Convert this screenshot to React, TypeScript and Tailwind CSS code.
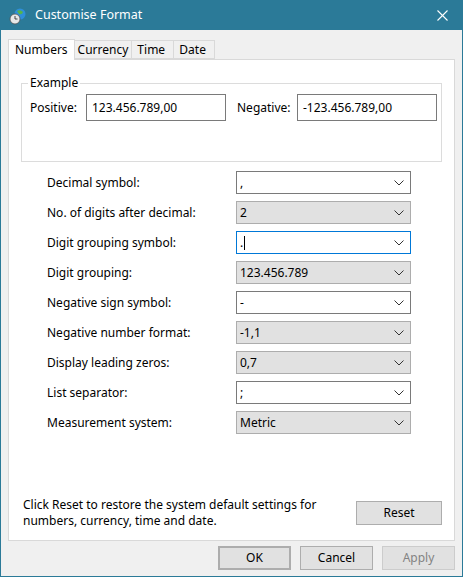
const rows: [string, string, string][] = [
  ['Decimal symbol:', ',', 'edit'],
  ['No. of digits after decimal:', '2', 'list'],
  ['Digit grouping symbol:', '.', 'focus'],
  ['Digit grouping:', '123.456.789', 'list'],
  ['Negative sign symbol:', '-', 'edit'],
  ['Negative number format:', '-1,1', 'list'],
  ['Display leading zeros:', '0,7', 'list'],
  ['List separator:', ';', 'edit'],
  ['Measurement system:', 'Metric', 'list'],
];

const Chevron = () => (
  <svg width="10" height="6" viewBox="0 0 10 6" fill="none" stroke="#333" strokeWidth="1">
    <polyline points="0.5 0.5 5 5 9.5 0.5" />
  </svg>
);

const Combo = ({ value, kind }: { value: string; kind: string }) => {
  const cls =
    kind === 'list'
      ? 'bg-[#e1e1e1] border-[#adadad]'
      : kind === 'focus'
        ? 'bg-white border-[#0078d7]'
        : 'bg-white border-[#7a7a7a]';
  return (
    <div className={`flex h-[23px] w-[175px] items-center justify-between border pl-[3px] pr-[6px] ${cls}`}>
      <span className="flex items-center">
        {value}
        {kind === 'focus' && <span className="ml-px inline-block h-[14px] w-px bg-black" />}
      </span>
      <Chevron />
    </div>
  );
};

const Button = ({ label, cls = '' }: { label: string; cls?: string }) => (
  <div className={`flex h-[24px] w-[73px] items-center justify-center border border-[#adadad] bg-[#e1e1e1] ${cls}`}>
    {label}
  </div>
);

export default function App() {
  return (
    <div
      className="h-[577px] w-[463px] border border-[#2b7a98] bg-[#f0f0f0] text-[12px] text-black"
      style={{ fontFamily: '"Noto Sans", "Open Sans", sans-serif' }}
    >
      <div className="flex h-[29px] items-center bg-[#2b7a98] text-white">
        <svg width="18" height="18" viewBox="0 0 18 18" className="ml-[8px] mr-[8px]">
          <circle cx="11" cy="7" r="5.5" fill="#2f8fd8" />
          <path d="M8 4 q3 -2 6 1 q-1 3 -4 2 z" fill="#56b54a" />
          <circle cx="6" cy="12" r="5" fill="#e8e8e8" stroke="#555" strokeWidth="0.8" />
          <path d="M6 9 v3 h2.5" stroke="#333" strokeWidth="0.9" fill="none" />
        </svg>
        <span className="text-[12.5px]">Customise Format</span>
        <svg width="11" height="11" viewBox="0 0 11 11" className="ml-auto mr-[14px]" stroke="white" strokeWidth="1.1">
          <line x1="0.5" y1="0.5" x2="10.5" y2="10.5" />
          <line x1="10.5" y1="0.5" x2="0.5" y2="10.5" />
        </svg>
      </div>

      <div className="px-[7px] pt-[9px]">
        <div className="flex h-[20px] items-end">
          <div className="relative z-10 -mb-px flex h-[21px] items-center border border-b-0 border-[#d9d9d9] bg-white px-[6px]">Numbers</div>
          <div className="flex h-[19px] items-center border border-l-0 border-[#d9d9d9] bg-[#f0f0f0] px-[3px]">Currency</div>
          <div className="flex h-[19px] w-[42px] items-center border border-l-0 border-[#d9d9d9] bg-[#f0f0f0] px-[5px]">Time</div>
          <div className="flex h-[19px] w-[41px] items-center border border-l-0 border-[#d9d9d9] bg-[#f0f0f0] px-[5px]">Date</div>
        </div>
        <div className="flex h-[482px] w-[447px] flex-col border border-[#d9d9d9] bg-white">
          <div className="relative mx-[12px] mt-[23px] h-[79px] border border-[#dcdcdc]">
            <span className="absolute -top-[9px] left-[6px] bg-white px-[2px] leading-[16px]">Example</span>
            <div className="mt-[10px] flex items-center">
              <span className="ml-[8px] w-[56px]">Positive:</span>
              <div className="flex h-[27px] w-[140px] items-center border border-[#7a7a7a] px-[5px]">123.456.789,00</div>
              <span className="ml-[11px] w-[60px]">Negative:</span>
              <div className="flex h-[27px] w-[140px] items-center border border-[#7a7a7a] px-[5px]">-123.456.789,00</div>
            </div>
          </div>

          <div className="mt-[9px] flex flex-col gap-[7px]">
            {rows.map(([label, value, kind]) => (
              <div key={label} className="flex items-center">
                <span className="ml-[38px] w-[189px]">{label}</span>
                <Combo value={value} kind={kind} />
              </div>
            ))}
          </div>

          <div className="mt-auto mb-[11px] flex items-center">
            <p className="ml-[14px] w-[300px] leading-[16px]">
              Click Reset to restore the system default settings for numbers, currency, time and date.
            </p>
            <Button label="Reset" cls="ml-[33px] h-[23px] w-[86px]" />
          </div>
        </div>

        <div className="mt-[5px] flex justify-end gap-[9px] pr-[0px]">
          <Button label="OK" cls="border-2 border-[#0078d7]" />
          <Button label="Cancel" />
          <Button label="Apply" cls="border-[#cccccc] bg-[#cccccc] text-[#838383]" />
        </div>
      </div>
    </div>
  );
}
